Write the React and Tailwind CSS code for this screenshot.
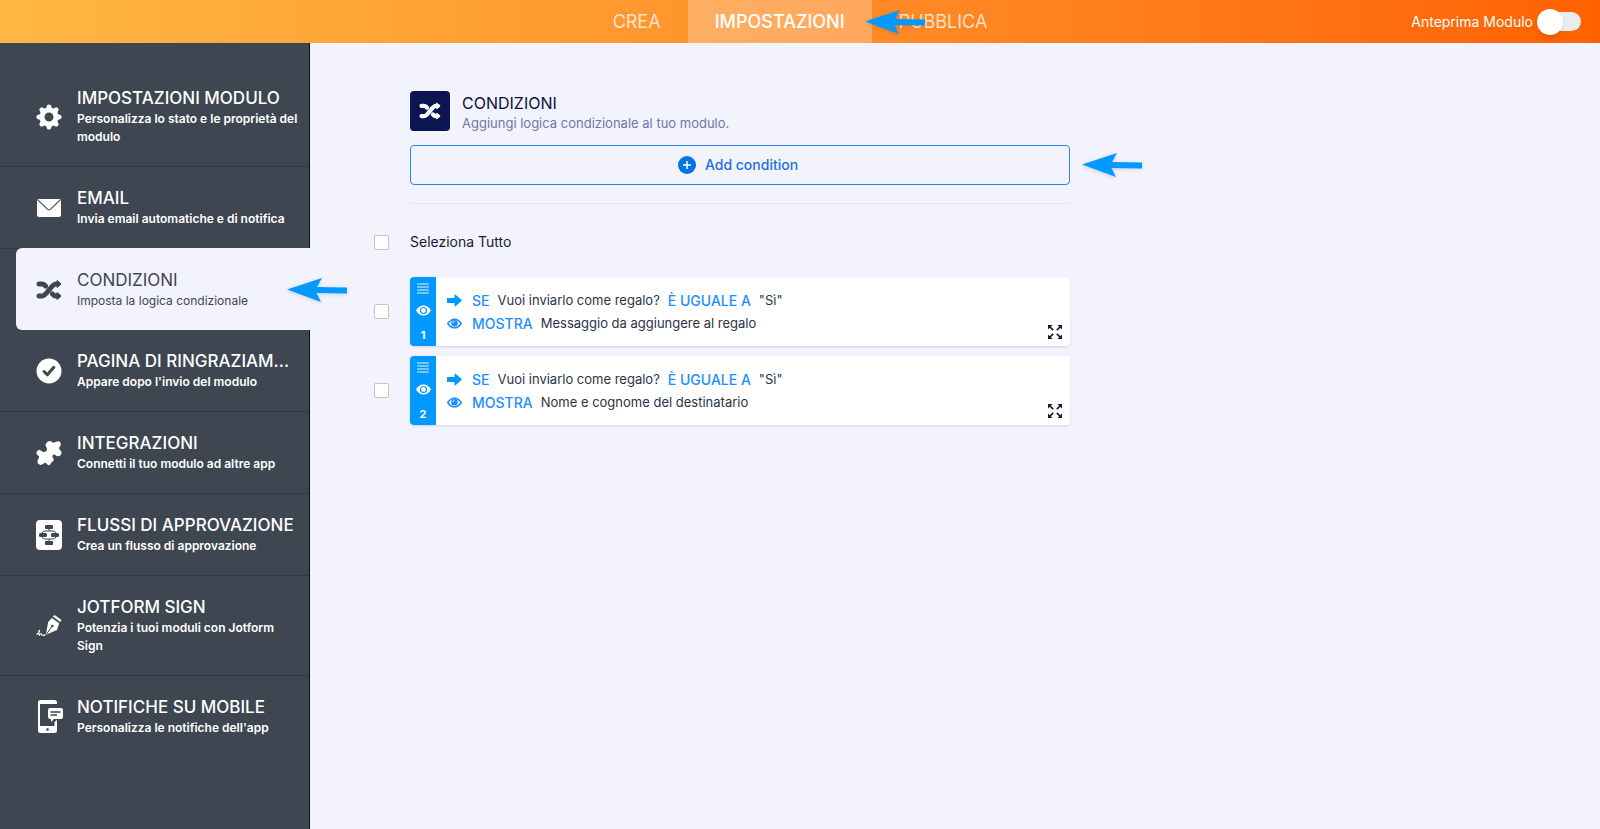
import React from "react";

const menu = [
  { id: "settings", title: "IMPOSTAZIONI MODULO", text: "Personalizza lo stato e le proprietà del modulo", icon: GearIcon },
  { id: "email", title: "EMAIL", text: "Invia email automatiche e di notifica", icon: MailIcon },
  { id: "conditions", title: "CONDIZIONI", text: "Imposta la logica condizionale", icon: ShuffleIcon, active: true },
  { id: "thankyou", title: "PAGINA DI RINGRAZIAM...", text: "Appare dopo l'invio del modulo", icon: CheckIcon },
  { id: "integrations", title: "INTEGRAZIONI", text: "Connetti il tuo modulo ad altre app", icon: PuzzleIcon },
  { id: "approval", title: "FLUSSI DI APPROVAZIONE", text: "Crea un flusso di approvazione", icon: FlowIcon },
  { id: "sign", title: "JOTFORM SIGN", text: "Potenzia i tuoi moduli con Jotform Sign", icon: SignIcon },
  { id: "mobile", title: "NOTIFICHE SU MOBILE", text: "Personalizza le notifiche dell'app", icon: MobileIcon },
];

const conditions = [
  { id: 1, field: "Vuoi inviarlo come regalo?", value: '"Sì"', target: "Messaggio da aggiungere al regalo" },
  { id: 2, field: "Vuoi inviarlo come regalo?", value: '"Sì"', target: "Nome e cognome del destinatario" },
];

function GearIcon() {
  return (
    <svg width="26" height="26" viewBox="0 0 26 26" fill="none" aria-hidden="true">
      <circle cx="13" cy="13" r="7" stroke="currentColor" strokeWidth="5" />
      {[0, 45, 90, 135, 180, 225, 270, 315].map((a) => (
        <path key={a} d="M9.8 5 11.2 1Q13-.2 14.8 1L16.2 5Z" fill="currentColor" transform={`rotate(${a} 13 13)`} />
      ))}
    </svg>
  );
}

function MailIcon() {
  return (
    <svg width="24" height="18" viewBox="0 0 24 18" fill="none" aria-hidden="true">
      <rect width="24" height="18" rx="2" fill="currentColor" />
      <path d="M.8.8 10.6 10.4Q12 11.6 13.4 10.4L23.2.8" stroke="#3e4652" strokeWidth="1.1" />
    </svg>
  );
}

function ShuffleIcon({ size = 26 }) {
  return (
    <svg width={size} height={size} viewBox="0 0 26 26" fill="none" stroke="currentColor" aria-hidden="true">
      <path d="M3 7H6Q8 7 9.500 9M3 19H6C11 19 15 7 20 7H22M16.500 17Q18 19 20 19H22" strokeWidth="5" strokeLinecap="round" />
      <path d="M21 3.500 25 7 21 10.500ZM21 15.500 25 19 21 22.500Z" fill="currentColor" strokeWidth="1" strokeLinejoin="round" />
    </svg>
  );
}

function CheckIcon() {
  return (
    <svg width="26" height="26" viewBox="0 0 26 26" fill="none" aria-hidden="true">
      <circle cx="13" cy="13" r="12.5" fill="currentColor" />
      <path d="M8 13.5 11.3 16.8 17.8 9.3" stroke="#3e4652" strokeWidth="3" strokeLinecap="round" strokeLinejoin="round" />
    </svg>
  );
}

function PuzzleIcon() {
  return (
    <svg width="26" height="26" viewBox="0 0 26 26" fill="currentColor" aria-hidden="true">
      <path d="M10 3.5Q12.5-.8 16 2Q17.5 3.6 19.5 2Q22.5.2 24.3 2.2Q25.6 4.5 23.6 7Q22.4 9 24 10Q27 12.500 24.3 15.5Q21.500 17.2 19.5 15.2Q17.500 13.500 16.6 15.5Q16 17 17.4 18.5Q18.6 20.5 16 22Q14.5 23 14.6 24Q13 26.500 10.8 24Q9.500 21.8 7.5 23.8Q4.500 26 2.2 23.8Q.6 21 2.5 18.500Q4 16.6 2 15.5Q-.8 13.500 1.300 10.8Q3.500 9.2 5.5 11Q7.5 12.500 9.8 11.500Q11.800 9.800 10.500 7.500Q9 5.500 10 3.5Z" />
    </svg>
  );
}

function FlowIcon() {
  return (
    <svg width="26" height="30" viewBox="0 0 26 30" fill="none" aria-hidden="true">
      <rect width="26" height="30" rx="4" fill="currentColor" />
      <g fill="#3e4652">
        <rect x="9" y="5" width="8" height="4" rx="1" />
        <rect x="3" y="13" width="8" height="4" rx="1.5" />
        <rect x="15" y="13" width="8" height="4" rx="1.5" />
        <rect x="9" y="21" width="8" height="4" rx="1" />
      </g>
      <path d="M13 9V11M13 19V21M6 13Q7 11 9 11H17Q19 11 20 13M6 17Q7 19 9 19H17Q19 19 20 17" stroke="#3e4652" />
    </svg>
  );
}

function SignIcon() {
  return (
    <svg width="26" height="22" viewBox="0 0 26 22" fill="none" aria-hidden="true">
      <path d="M16.8 1.6 18.600 0 25.500 5 24.300 7Z" fill="currentColor" />
      <path d="M15.800 3 23.200 8.300 21 15 10.500 19.500 10 18.800 12.200 7Z" fill="currentColor" />
      <path d="M10.500 19 16 11.500" stroke="#3e4652" strokeWidth="1" />
      <circle cx="16.300" cy="11" r="1.300" fill="#3e4652" />
      <path d="M.5 19.500Q3.500 18 3.500 15Q2 18.500 3.500 20 5.500 17.500 6 20 8 21 9.500 19.500" stroke="currentColor" strokeWidth="1.2" />
    </svg>
  );
}

function MobileIcon() {
  return (
    <svg className="ml-1 shrink-0" width="26" height="33" viewBox="0 0 26 33" fill="none" aria-hidden="true">
      <path d="M19 4V2.5Q19 0 16.5 0H2.5Q0 0 0 2.5V30.5Q0 33 2.5 33H16.5Q19 33 19 30.5V20L16.5 22V26H2V4Z" fill="currentColor" />
      <circle cx="9.5" cy="29.5" r="1.3" fill="#3e4652" />
      <path d="M12 8H23Q25 8 25 10V17Q25 19 23 19H16L13 22V19H12Q10 19 10 17V10Q10 8 12 8Z" fill="currentColor" />
      <path d="M12.5 12H22.5M12.5 15H19" stroke="#3e4652" strokeWidth="1.5" />
    </svg>
  );
}

function EyeIcon() {
  return (
    <svg width="15" height="11" viewBox="0 0 15 11" fill="none" stroke="currentColor" aria-hidden="true">
      <path d="M.8 5.5Q3.5 1.2 7.5 1.2T14.2 5.5Q11.5 9.8 7.5 9.8T.8 5.5Z" strokeWidth="1.6" />
      <circle cx="7.5" cy="5.2" r="3.3" fill="currentColor" stroke="none" />
      <path d="M5.8 5A1.8 1.8 0 0 1 7.5 3.5" className="stroke-white" strokeWidth=".9" />
    </svg>
  );
}

function WhiteEyeIcon() {
  return (
    <svg width="15" height="11" viewBox="0 0 15 11" fill="none" aria-hidden="true">
      <path d="M0 5.5Q3 .5 7.5 .5T15 5.5Q12 10.5 7.5 10.5T0 5.5Z" fill="currentColor" />
      <circle cx="7.5" cy="5.5" r="3" stroke="#0099ff" strokeWidth="1.2" />
    </svg>
  );
}

function ArrowIcon() {
  return (
    <svg width="15" height="13" viewBox="0 0 15 13" fill="currentColor" aria-hidden="true">
      <path d="M0 4H7.5V1Q7.5 0 8.5.8L14.5 5.8Q15 6.5 14.5 7L8.5 12.2Q7.5 13 7.5 12V9H0Z" />
    </svg>
  );
}

function ExpandIcon() {
  return (
    <svg width="14" height="14" viewBox="0 0 14 14" fill="none" aria-hidden="true">
      {[0, 90, 180, 270].map((a) => (
        <g key={a} transform={`rotate(${a} 7 7)`}>
          <path d="M0 0H4.6L0 4.6Z" fill="currentColor" />
          <path d="M1.5 1.5 5.2 5.2" stroke="currentColor" strokeWidth="1.7" />
        </g>
      ))}
    </svg>
  );
}

// blue pointer that highlights a step
function Pointer({ className }) {
  return (
    <svg className={`absolute z-10 drop-shadow-sm pointer-events-none ${className}`} width="60" height="24" viewBox="0 0 60 24" aria-hidden="true">
      <path d="M0 11.5 35 0 30 9 60 9.5V15.5L29.5 15 34 24Z" fill="#0099ff" />
    </svg>
  );
}

function Checkbox({ label }) {
  return (
    <input
      type="checkbox"
      aria-label={label}
      className="size-[15px] shrink-0 appearance-none rounded-xs border border-[#c4c4c8] bg-white checked:bg-[#0099ff]"
    />
  );
}

function Header() {
  return (
    <header className="grid h-[43px] grid-cols-[1fr_auto_1fr] bg-linear-to-r from-[#ffb743] to-[#ff6100]">
      <nav className="col-start-2 flex text-lg text-white/75">
        <a href="#crea" className="flex items-center px-[27px]">CREA</a>
        <a href="#impostazioni" className="relative flex items-center bg-white/25 px-[27px] font-medium text-white">
          IMPOSTAZIONI
          <Pointer className="top-[10px] -right-[53px]" />
        </a>
        <a href="#pubblica" className="flex items-center px-[27px]">PUBBLICA</a>
      </nav>
      <label className="flex items-center justify-end gap-3 pr-[19px] text-sm text-white">
        Anteprima Modulo
        <input
          type="checkbox"
          role="switch"
          className="relative h-[19px] w-9 appearance-none rounded-full bg-[#e8eeed] before:absolute before:-top-[3px] before:-left-2 before:size-[26px] before:rounded-full before:bg-white before:shadow-md"
        />
      </label>
    </header>
  );
}

function MenuItem({ item }) {
  const Icon = item.icon;
  return (
    <li className={item.active ? "relative -mt-px -mr-px pl-4" : "border-b border-[#323945] last:border-0"}>
      <a
        href={`#${item.id}`}
        className={
          item.active
            ? "flex items-center gap-[15px] rounded-l-md bg-[#f3f3fe] pt-[21px] pr-2 pb-5 pl-5 text-[#3e4652]"
            : "flex items-center gap-[15px] py-5 pr-[7px] pl-9 text-white"
        }
      >
        <span className="flex w-[26px] shrink-0 justify-center">
          <Icon />
        </span>
        <span className="min-w-0">
          <span className={`mb-px block text-[17px] leading-[22px] whitespace-nowrap ${item.active ? "" : "font-medium"}`}>{item.title}</span>
          <span className={`block text-xs leading-[18px] ${item.active ? "" : "font-semibold"}`}>{item.text}</span>
        </span>
      </a>
      {item.active && <Pointer className="top-[30px] -right-[37px]" />}
    </li>
  );
}

function Condition({ item }) {
  return (
    <li className="flex items-center gap-[21px]">
      <Checkbox label={`Condizione ${item.id}`} />
      <div className="flex min-w-0 flex-1 rounded-sm bg-white shadow-sm">
        <div className="flex w-[26px] shrink-0 flex-col items-center justify-between rounded-l-sm bg-[#0099ff] pt-[6px] pb-[3px] text-white">
          <svg width="12" height="11" viewBox="0 0 12 11" stroke="currentColor" strokeWidth="1.5" opacity=".6" aria-hidden="true">
            <path d="M0 1H12M0 4H12M0 7H12M0 10H12" />
          </svg>
          <WhiteEyeIcon />
          <span className="text-[11px] leading-4 font-bold">{item.id}</span>
        </div>
        <div className="flex-1 pt-3 pb-[11px] pl-[11px] text-[13px] leading-[23px] text-[#2c3345]">
          <p className="flex items-center">
            <span className="mr-[10px] text-[#0099ff]"><ArrowIcon /></span>
            <span className="text-sm leading-[23px] font-medium text-[#1e8eff]">SE</span>
            <span className="mx-2">{item.field}</span>
            <span className="mr-2 text-sm leading-[23px] font-medium text-[#1e8eff]">È UGUALE A</span>
            {item.value}
          </p>
          <p className="flex items-center">
            <span className="mr-[10px] text-[#1e8eff]"><EyeIcon /></span>
            <span className="mr-2 text-sm leading-[23px] font-medium text-[#1e8eff]">MOSTRA</span>
            {item.target}
          </p>
        </div>
        <button type="button" aria-label="Espandi" className="self-end p-2 pb-[7px] text-[#141b3a]">
          <ExpandIcon />
        </button>
      </div>
    </li>
  );
}

export default function App() {
  return (
    <div className="flex min-h-screen flex-col bg-[#f3f3fe] font-[Inter,sans-serif]">
      <Header />
      <div className="flex flex-1">
        <aside className="w-[310px] shrink-0 border-r border-[#0b0f1c] bg-[#3e4652] pt-6">
          <ul>
            {menu.map((item) => (
              <MenuItem key={item.id} item={item} />
            ))}
          </ul>
        </aside>
        <main className="w-full max-w-[760px] pt-12 pl-16">
          <div className="pl-9">
            <div className="flex gap-3">
              <div className="flex size-10 items-center justify-center rounded-sm bg-[#0a1551] text-white">
                <ShuffleIcon size={22} />
              </div>
              <div>
                <h1 className="text-base leading-6 text-[#0a1038]">CONDIZIONI</h1>
                <p className="text-[13px] leading-4 text-[#6f76a7]">Aggiungi logica condizionale al tuo modulo.</p>
              </div>
            </div>
            <div className="relative mt-[14px] border-b border-[#e6e6ef] pb-[18px]">
              <button type="button" className="flex h-10 w-full items-center justify-center gap-[9px] rounded-sm border border-[#2e83e8] pr-1 text-sm font-medium text-[#1b6fe0]">
                <svg width="18" height="18" viewBox="0 0 18 18" aria-hidden="true">
                  <circle cx="9" cy="9" r="9" fill="#0075e3" />
                  <path d="M9 5V13M5 9H13" stroke="white" strokeWidth="1.5" />
                </svg>
                Add condition
              </button>
              <Pointer className="top-2 -right-[72px]" />
            </div>
          </div>
          <label className="mt-[27px] flex items-center gap-[21px] text-sm leading-[22px] text-[#1b1b2b]">
            <Checkbox />
            Seleziona Tutto
          </label>
          <ul className="mt-6 flex flex-col gap-[10px]">
            {conditions.map((item) => (
              <Condition key={item.id} item={item} />
            ))}
          </ul>
        </main>
      </div>
    </div>
  );
}
